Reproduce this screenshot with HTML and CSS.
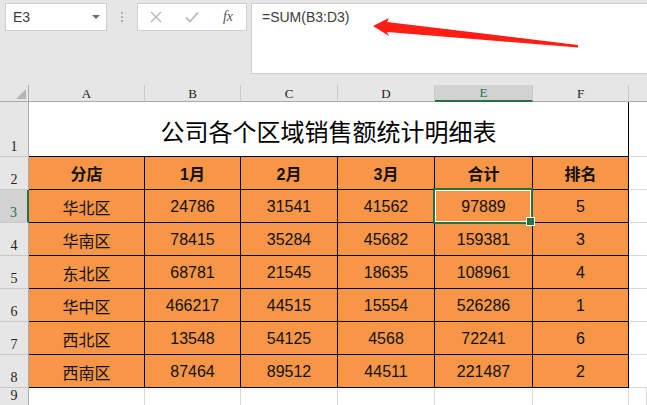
FILE: index.html
```html
<!DOCTYPE html>
<html lang="zh-CN">
<head>
<meta charset="utf-8">
<title>Sheet</title>
<link rel="stylesheet" href="styles.css">
</head>
<body>
<div class="app">
  <div class="topbar">
    <div class="namebox"><span>E3</span><span class="caret"></span></div>
    <div class="dots"><i></i><i></i><i></i></div>
    <div class="fxbox">
      <span class="btn"><svg width="12" height="12" viewBox="0 0 12 12"><path d="M1 1L11 11M11 1L1 11" stroke="#b8b8b8" stroke-width="1.4" fill="none"/></svg></span>
      <span class="btn"><svg width="14" height="12" viewBox="0 0 14 12"><path d="M1 6.5L5 10.5L13 1.5" stroke="#b8b8b8" stroke-width="1.8" fill="none"/></svg></span>
      <span class="btn fx">fx</span>
    </div>
    <div class="formula">=SUM(B3:D3)</div>
  </div>

  <div class="sheet">
    <div class="ch corner"><span class="tri"></span></div>
    <div class="ch">A</div>
    <div class="ch">B</div>
    <div class="ch">C</div>
    <div class="ch">D</div>
    <div class="ch active">E</div>
    <div class="ch">F</div>
    <div class="ch last"></div>

    <div class="rh">1</div>
    <div class="title">公司各个区域销售额统计明细表</div>
    <div class="g"></div>

    <div class="rh">2</div>
    <div class="c h">分店</div><div class="c h">1月</div><div class="c h">2月</div><div class="c h">3月</div><div class="c h">合计</div><div class="c h">排名</div>
    <div class="g"></div>

    <div class="rh active">3</div>
    <div class="c">华北区</div><div class="c">24786</div><div class="c">31541</div><div class="c">41562</div><div class="c sel">97889</div><div class="c">5</div>
    <div class="g"></div>

    <div class="rh">4</div>
    <div class="c">华南区</div><div class="c">78415</div><div class="c">35284</div><div class="c">45682</div><div class="c">159381</div><div class="c">3</div>
    <div class="g"></div>

    <div class="rh">5</div>
    <div class="c">东北区</div><div class="c">68781</div><div class="c">21545</div><div class="c">18635</div><div class="c">108961</div><div class="c">4</div>
    <div class="g"></div>

    <div class="rh">6</div>
    <div class="c">华中区</div><div class="c">466217</div><div class="c">44515</div><div class="c">15554</div><div class="c">526286</div><div class="c">1</div>
    <div class="g"></div>

    <div class="rh">7</div>
    <div class="c">西北区</div><div class="c">13548</div><div class="c">54125</div><div class="c">4568</div><div class="c">72241</div><div class="c">6</div>
    <div class="g"></div>

    <div class="rh">8</div>
    <div class="c">西南区</div><div class="c">87464</div><div class="c">89512</div><div class="c">44511</div><div class="c">221487</div><div class="c">2</div>
    <div class="g"></div>

    <div class="rh">9</div>
    <div class="e"></div><div class="e"></div><div class="e"></div><div class="e"></div><div class="e"></div><div class="e"></div><div class="e"></div>
  </div>

  <svg class="arrow" width="647" height="405" viewBox="0 0 647 405">
    <polygon points="373,26 389,18 387,22 578,45 578,47.5 387,32 389,36" fill="#fe1e14"/>
  </svg>
</div>
</body>
</html>
```

FILE: styles.css
```css
* {
  box-sizing: border-box;
}

body {
  margin: 0;
  width: 647px;
  height: 405px;
  overflow: hidden;
  background: #fff;
  font-family: "Liberation Sans", "Noto Sans CJK SC", sans-serif;
}

.app {
  position: relative;
  width: 647px;
  height: 405px;
  overflow: hidden;
}

/* ---------- top formula bar ---------- */
.topbar {
  height: 85px;
  background: #e6e6e6;
  display: flex;
  align-items: flex-start;
  padding: 3px 0 0 5px;
}

.namebox {
  width: 102px;
  height: 28px;
  background: #fff;
  border: 1px solid #cfcfcf;
  display: flex;
  align-items: center;
  justify-content: space-between;
  padding: 0 6px 0 7px;
  font-size: 14px;
  color: #3c3c3c;
}

.caret {
  width: 0;
  height: 0;
  border-left: 4px solid transparent;
  border-right: 4px solid transparent;
  border-top: 4px solid #707070;
}

.dots {
  width: 30px;
  height: 28px;
  display: flex;
  flex-direction: column;
  align-items: center;
  justify-content: center;
  gap: 2px;
}

.dots i {
  display: block;
  width: 2px;
  height: 2px;
  background: #b0b0b0;
}

.fxbox {
  width: 110px;
  height: 28px;
  background: #fff;
  border: 1px solid #cfcfcf;
  display: flex;
  align-items: center;
}

.btn {
  width: 36px;
  display: flex;
  align-items: center;
  justify-content: center;
}

.fx {
  font-family: "Liberation Serif", serif;
  font-style: italic;
  font-size: 14px;
  color: #555;
}

.formula {
  flex: 1;
  height: 71px;
  margin-left: 4px;
  margin-right: -2px;
  background: #fff;
  border: 1px solid #cfcfcf;
  padding: 5px 0 0 10px;
  font-size: 14px;
  line-height: 16px;
  color: #3c3c3c;
}

/* ---------- sheet grid ---------- */
.sheet {
  display: grid;
  grid-template-columns: 29px 116px 96px 97px 97px 98px 96px 1fr;
  grid-template-rows: 17px 55px repeat(7, 33px) 18px;
}

.ch {
  background: #e6e6e6;
  border-right: 1px solid #c9c9c9;
  border-bottom: 1px solid #ababab;
  display: flex;
  align-items: center;
  justify-content: center;
  font-family: "Liberation Serif", serif;
  font-size: 13px;
  color: #222;
  padding-top: 1px;
}

.ch.corner {
  border-right-color: #ababab;
  align-items: flex-end;
  justify-content: flex-end;
  padding: 0 2px 2px 0;
}

.tri {
  width: 0;
  height: 0;
  border-left: 10px solid transparent;
  border-bottom: 10px solid #b5b5b5;
}

.ch.active {
  background: #d2d2d2;
  color: #217346;
  border-bottom: 2px solid #217346;
}

.ch.last {
  border-right: none;
}

.rh {
  background: #e6e6e6;
  border-right: 1px solid #ababab;
  border-bottom: 1px solid #c9c9c9;
  display: flex;
  align-items: flex-end;
  justify-content: center;
  font-family: "Liberation Serif", serif;
  font-size: 14px;
  line-height: 14px;
  color: #222;
  padding-bottom: 2px;
}

.rh.active {
  background: #d2d2d2;
  color: #217346;
  border-right: 2px solid #217346;
}

.title {
  grid-column: span 6;
  background: #fff;
  border-right: 1px solid #000;
  border-bottom: 1px solid #000;
  display: flex;
  align-items: center;
  justify-content: center;
  padding-top: 2px;
  font-family: "Noto Sans CJK SC", sans-serif;
  font-size: 24px;
  color: #000;
}

.g {
  border-bottom: 1px solid #d9d9d9;
}

.e {
  border-right: 1px solid #d9d9d9;
  border-bottom: 1px solid #d9d9d9;
}

.c {
  background: #f79646;
  border-right: 1px solid #000;
  border-bottom: 1px solid #000;
  display: flex;
  align-items: center;
  justify-content: center;
  padding-top: 2px;
  font-size: 16px;
  color: #111;
}

.c.h {
  font-weight: bold;
  padding-top: 0;
}

.c.sel {
  position: relative;
}

.c.sel::before {
  content: "";
  position: absolute;
  left: -2px;
  top: -2px;
  right: -1px;
  bottom: -2px;
  border: 2px solid #217346;
  box-shadow: inset 0 0 0 1px #fff;
  z-index: 2;
}

.c.sel::after {
  content: "";
  position: absolute;
  right: -3px;
  bottom: -4px;
  width: 7px;
  height: 7px;
  background: #217346;
  border: 1px solid #fff;
  z-index: 3;
}

.arrow {
  position: absolute;
  left: 0;
  top: 0;
  pointer-events: none;
}
```
